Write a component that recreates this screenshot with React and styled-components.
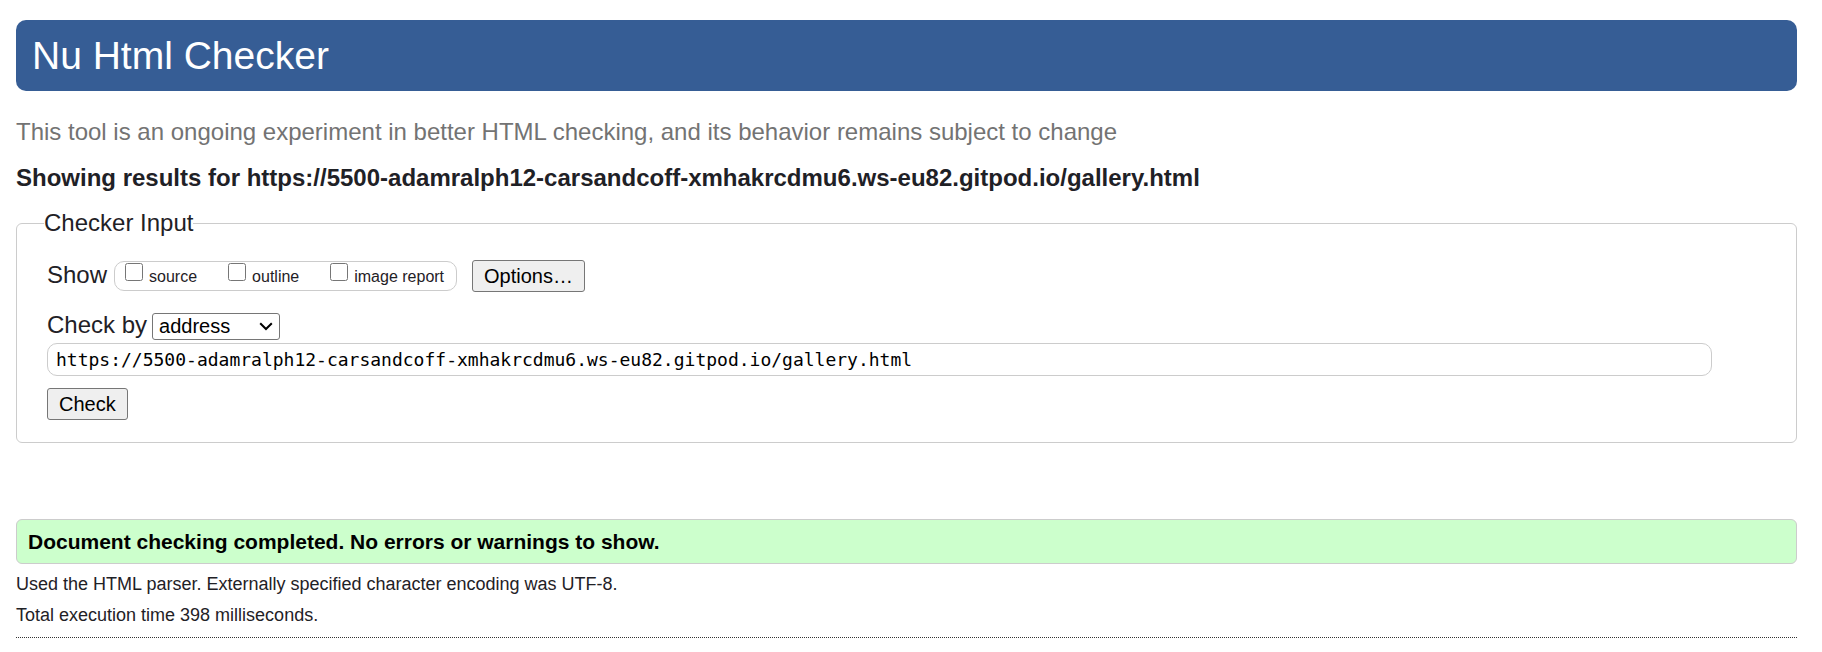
import React, { useState } from "react";
import styled, { createGlobalStyle } from "styled-components";

const GlobalStyle = createGlobalStyle`
  *, *::before, *::after { box-sizing: border-box; }
  body {
    margin: 0;
    background: #fff;
    color: #1f2126;
    font-family: "Liberation Sans", Arial, sans-serif;
    font-size: 24px;
    line-height: 28px;
  }
`;

const Page = styled.div`
  padding: 20px 25px 12px 16px;
`;

const Banner = styled.header`
  padding: 14px 16px 13px;
  border-radius: 10px;
  background: #365d95;
  color: #fff;
`;

const Title = styled.h1`
  margin: 0;
  font-size: 39px;
  font-weight: normal;
  line-height: 44px;
`;

const Note = styled.p`
  margin: 27px 0 0;
  color: #737373;
`;

const ResultHeading = styled.h2`
  margin: 18px 0 0;
  font-size: 24px;
  font-weight: bold;
`;

const InputPanel = styled.fieldset`
  display: flex;
  flex-direction: column;
  min-width: 0;
  margin: 17px 0 0;
  padding: 23px 84px 22px 30px;
  border: 1px solid #ccc;
  border-radius: 6px;
`;

const PanelLegend = styled.legend`
  margin-left: -3px;
  padding: 0;
`;

const Row = styled.div`
  display: flex;
  align-items: center;
  gap: ${({ $gap }) => $gap}px;
`;

const ShowRow = styled(Row)`
  margin-bottom: 20px;
`;

const Caption = styled.label`
  padding-bottom: 2px;
  line-height: 26px;
`;

const Choices = styled.div`
  display: flex;
  gap: 31px;
  height: 30px;
  margin-right: 8px;
  padding: 0 12px 0 10px;
  border: 1px solid #ccc;
  border-radius: 10px;
`;

const Choice = styled.label`
  display: flex;
  gap: 6px;
  font-size: 16px;
  line-height: 30px;
`;

const Tick = styled.input`
  width: 18px;
  height: 18px;
  margin: 1px 0 0;
`;

const Button = styled.button`
  align-self: flex-start;
  height: 32px;
  padding: 0 11px;
  border: 1px solid #767676;
  border-radius: 3px;
  background: #efefef;
  color: #000;
  font-family: inherit;
  font-size: 20px;
  line-height: 28px;
`;

const SelectBox = styled.div`
  display: grid;
  align-items: center;
`;

const Select = styled.select`
  grid-area: 1 / 1;
  width: 128px;
  height: 27px;
  padding: 0 6px;
  border: 1px solid #767676;
  border-radius: 3px;
  background: #fff;
  color: #000;
  font-family: inherit;
  font-size: 20px;
  appearance: none;
`;

const Chevron = styled.svg`
  grid-area: 1 / 1;
  justify-self: end;
  margin-right: 7px;
  pointer-events: none;
`;

const AddressField = styled.input`
  width: 100%;
  height: 33px;
  margin: 3px 0 12px;
  padding: 0 8px;
  border: 1px solid #ccc;
  border-radius: 10px;
  color: #000;
  font-family: "DejaVu Sans Mono", monospace;
  font-size: 18px;
`;

const Success = styled.p`
  margin: 76px 0 0;
  padding: 8px 11px;
  border: 1px solid #ccc;
  border-radius: 6px;
  background: #cfc;
  color: #000;
  font-size: 21px;
  font-weight: bold;
  line-height: 27px;
`;

const Detail = styled.p`
  margin: ${({ $top }) => $top}px 0 0;
  font-size: 18px;
  line-height: 24px;
`;

const Divider = styled.hr`
  margin: 10px 0 0;
  border: 0;
  border-top: 1px dotted #333;
`;

const CHOICES = ["source", "outline", "image report"];

export default function App() {
  const [address, setAddress] = useState(
    "https://5500-adamralph12-carsandcoff-xmhakrcdmu6.ws-eu82.gitpod.io/gallery.html"
  );

  return (
    <>
      <GlobalStyle />
      <Page>
        <Banner>
          <Title>Nu Html Checker</Title>
        </Banner>
        <main>
          <Note>
            This tool is an ongoing experiment in better HTML checking, and its
            behavior remains subject to change
          </Note>
          <ResultHeading>
            Showing results for
            https://5500-adamralph12-carsandcoff-xmhakrcdmu6.ws-eu82.gitpod.io/gallery.html
          </ResultHeading>
          <form onSubmit={(event) => event.preventDefault()}>
            <InputPanel>
              <PanelLegend>Checker Input</PanelLegend>
              <ShowRow $gap={7}>
                <Caption as="span" id="show-caption">Show</Caption>
                <Choices role="group" aria-labelledby="show-caption">
                  {CHOICES.map((name) => (
                    <Choice key={name}>
                      <Tick type="checkbox" name={name} />
                      {name}
                    </Choice>
                  ))}
                </Choices>
                <Button type="button">Options…</Button>
              </ShowRow>
              <Row $gap={5}>
                <Caption htmlFor="method">Check by</Caption>
                <SelectBox>
                  <Select id="method" defaultValue="address">
                    <option value="address">address</option>
                    <option value="upload">file upload</option>
                    <option value="text">text input</option>
                  </Select>
                  <Chevron width="14" height="9" viewBox="0 0 14 9" aria-hidden="true">
                    <path d="M1.2 1.2 7 7l5.800-5.800" fill="none" stroke="#000" strokeWidth="2" />
                  </Chevron>
                </SelectBox>
              </Row>
              <AddressField
                type="url"
                aria-label="Address"
                value={address}
                onChange={(event) => setAddress(event.target.value)}
              />
              <Button type="submit">Check</Button>
            </InputPanel>
          </form>
          <Success>
            Document checking completed. No errors or warnings to show.
          </Success>
          <Detail $top={8}>
            Used the HTML parser. Externally specified character encoding was
            UTF-8.
          </Detail>
          <Detail $top={7}>Total execution time 398 milliseconds.</Detail>
          <Divider />
        </main>
      </Page>
    </>
  );
}
